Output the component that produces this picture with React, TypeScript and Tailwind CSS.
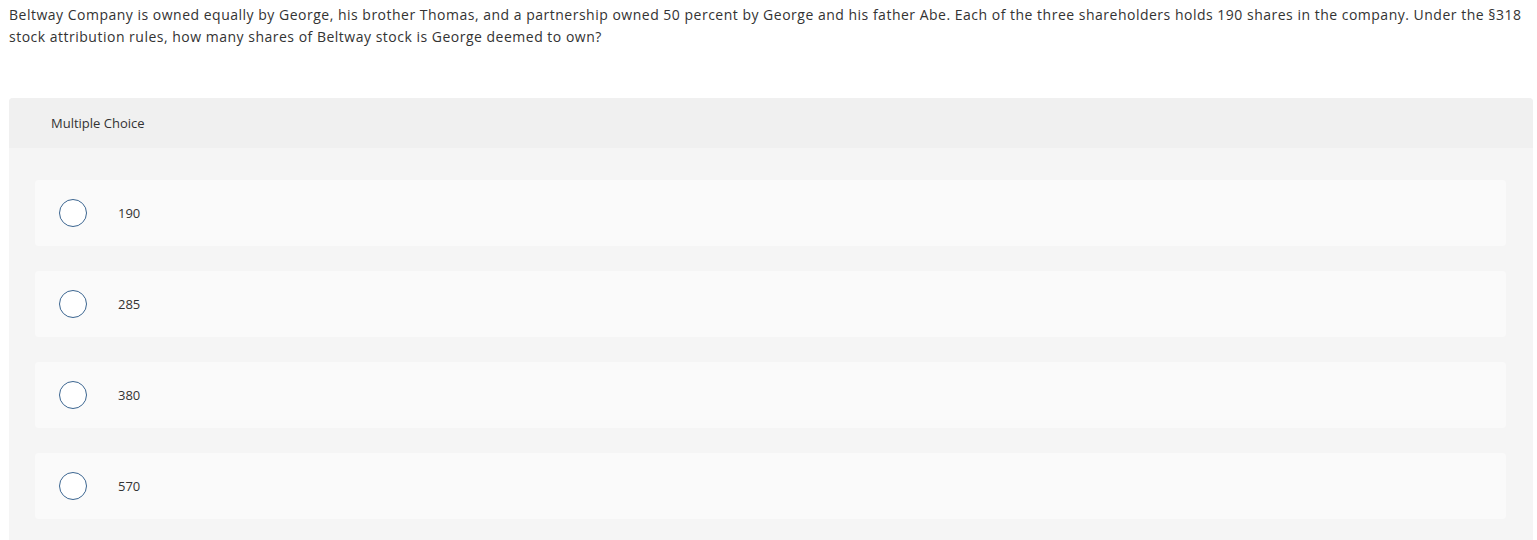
export default function App() {
  const options = ["190", "285", "380", "570"];
  return (
    <div className="min-h-screen bg-white text-[#333]" style={{ fontFamily: "'Open Sans', 'Liberation Sans', sans-serif" }}>
      <div className="px-[9px] pt-[4px] pb-[50px]">
        <p className="text-[14px] leading-[22px] text-[#333] tracking-[0.5px]">
          Beltway Company is owned equally by George, his brother Thomas, and a partnership owned 50 percent by George and his father Abe. Each of the three shareholders holds 190 shares in the company. Under the §318 stock attribution rules, how many shares of Beltway stock is George deemed to own?
        </p>
      </div>
      <div className="ml-[9px] mr-[4px] rounded-t-[4px] bg-[#f5f5f5]">
        <div className="h-[50px] flex items-center pl-[42px] pt-[2px] bg-[#f0f0f0] rounded-t-[4px] text-[13px] text-[#333]">
          Multiple Choice
        </div>
        <div className="px-[26px] pt-[32px] pb-[24px] flex flex-col gap-[25px] pr-[27px]">
          {options.map((o) => (
            <div key={o} className="h-[66px] bg-[#fafafa] rounded-[4px] flex items-center pl-[24px]">
              <span className="w-[28px] h-[28px] rounded-full border-[1.5px] border-[#3b6590] bg-white" />
              <span className="ml-[31px] pt-[2px] text-[13px] text-[#333]">{o}</span>
            </div>
          ))}
        </div>
      </div>
    </div>
  );
}
